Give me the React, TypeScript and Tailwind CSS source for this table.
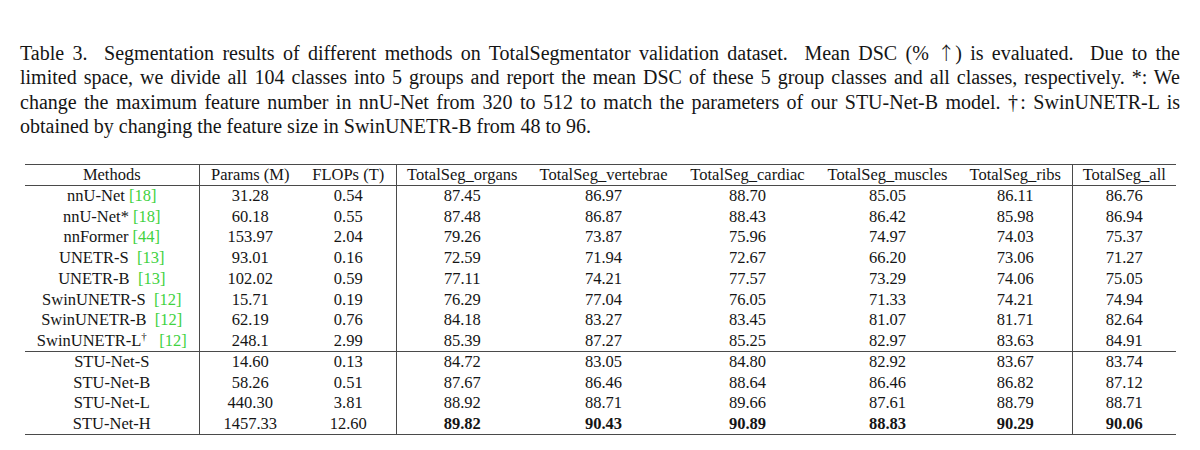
import React from "react";

const G = ({ n }: { n: string }) => <span className="text-[#3fd23f]">[{n}]</span>;

type Row = { m: React.ReactNode; v: string[]; bold?: boolean };

const top: Row[] = [
  { m: <>nnU-Net <G n="18" /></>, v: ["31.28", "0.54", "87.45", "86.97", "88.70", "85.05", "86.11", "86.76"] },
  { m: <>nnU-Net* <G n="18" /></>, v: ["60.18", "0.55", "87.48", "86.87", "88.43", "86.42", "85.98", "86.94"] },
  { m: <>nnFormer <G n="44" /></>, v: ["153.97", "2.04", "79.26", "73.87", "75.96", "74.97", "74.03", "75.37"] },
  { m: <>UNETR-S&nbsp;&nbsp;<G n="13" /></>, v: ["93.01", "0.16", "72.59", "71.94", "72.67", "66.20", "73.06", "71.27"] },
  { m: <>UNETR-B&nbsp;&nbsp;<G n="13" /></>, v: ["102.02", "0.59", "77.11", "74.21", "77.57", "73.29", "74.06", "75.05"] },
  { m: <>SwinUNETR-S&nbsp;&nbsp;<G n="12" /></>, v: ["15.71", "0.19", "76.29", "77.04", "76.05", "71.33", "74.21", "74.94"] },
  { m: <>SwinUNETR-B&nbsp;&nbsp;<G n="12" /></>, v: ["62.19", "0.76", "84.18", "83.27", "83.45", "81.07", "81.71", "82.64"] },
  {
    m: (
      <>
        SwinUNETR-L<sup className="text-[11px]">†</sup>&nbsp;&nbsp;&nbsp;<G n="12" />
      </>
    ),
    v: ["248.1", "2.99", "85.39", "87.27", "85.25", "82.97", "83.63", "84.91"],
  },
];

const bottom: Row[] = [
  { m: "STU-Net-S", v: ["14.60", "0.13", "84.72", "83.05", "84.80", "82.92", "83.67", "83.74"] },
  { m: "STU-Net-B", v: ["58.26", "0.51", "87.67", "86.46", "88.64", "86.46", "86.82", "87.12"] },
  { m: "STU-Net-L", v: ["440.30", "3.81", "88.92", "88.71", "89.66", "87.61", "88.79", "88.71"] },
  { m: "STU-Net-H", v: ["1457.33", "12.60", "89.82", "90.43", "90.89", "88.83", "90.29", "90.06"], bold: true },
];

const widths = [174, 102, 95, 132, 151, 137, 143, 113, 104];
const headers = [
  "Methods",
  "Params (M)",
  "FLOPs (T)",
  "TotalSeg_organs",
  "TotalSeg_vertebrae",
  "TotalSeg_cardiac",
  "TotalSeg_muscles",
  "TotalSeg_ribs",
  "TotalSeg_all",
];

const rule = "border-[#4a4a4a]";

function cellCls(i: number) {
  if (i === 0 || i === 2) return `border-r ${rule}`;
  if (i === 7) return `border-r ${rule}`;
  return "";
}

function BodyRow({ r, first }: { r: Row; first?: boolean }) {
  return (
    <tr className={`h-[20.75px] ${first ? `border-t ${rule}` : ""}`}>
      <td className={`p-0 text-center whitespace-nowrap ${cellCls(0)}`}>{r.m}</td>
      {r.v.map((v, i) => (
        <td
          key={i}
          className={`p-0 text-center whitespace-nowrap ${cellCls(i + 1)} ${
            r.bold && i >= 2 ? "font-bold" : ""
          }`}
        >
          {v}
        </td>
      ))}
    </tr>
  );
}

export default function App() {
  return (
    <div
      className="w-[1200px] h-[450px] bg-white text-[#151515] overflow-hidden"
      style={{ fontFamily: '"Liberation Serif", "Times New Roman", serif' }}
    >
      <div className="pt-[40px] pl-[20px] pr-[20px] text-[20px] leading-[24.3px]">
        <div className="text-justify [text-align-last:justify] whitespace-pre-wrap">
          {"Table 3.  Segmentation results of different methods on TotalSegmentator validation dataset.  Mean DSC (% "}
          <span className="font-['Noto_Sans_CJK_SC',sans-serif] font-light text-[18px]">↑</span>
          {") is evaluated.  Due to the"}
        </div>
        <div className="text-justify [text-align-last:justify] whitespace-pre-wrap">
          {"limited space, we divide all 104 classes into 5 groups and report the mean DSC of these 5 group classes and all classes, respectively. *: We"}
        </div>
        <div className="text-justify [text-align-last:justify] whitespace-pre-wrap">
          {"change the maximum feature number in nnU-Net from 320 to 512 to match the parameters of our STU-Net-B model. †: SwinUNETR-L is"}
        </div>
        <div>obtained by changing the feature size in SwinUNETR-B from 48 to 96.</div>
      </div>
      <div className="pl-[25px] pt-[26px]">
        <table className="table-fixed border-collapse text-[16.5px] leading-none" style={{ width: 1151 }}>
          <colgroup>
            {widths.map((w, i) => (
              <col key={i} style={{ width: w }} />
            ))}
          </colgroup>
          <thead>
            <tr className={`h-[21px] border-t border-b ${rule}`}>
              {headers.map((h, i) => (
                <th key={i} className={`p-0 font-normal text-center whitespace-nowrap ${cellCls(i)}`}>
                  {h}
                </th>
              ))}
            </tr>
          </thead>
          <tbody className={`border-b ${rule}`}>
            {top.map((r, i) => (
              <BodyRow key={i} r={r} />
            ))}
            {bottom.map((r, i) => (
              <BodyRow key={i} r={r} first={i === 0} />
            ))}
          </tbody>
        </table>
      </div>
    </div>
  );
}
